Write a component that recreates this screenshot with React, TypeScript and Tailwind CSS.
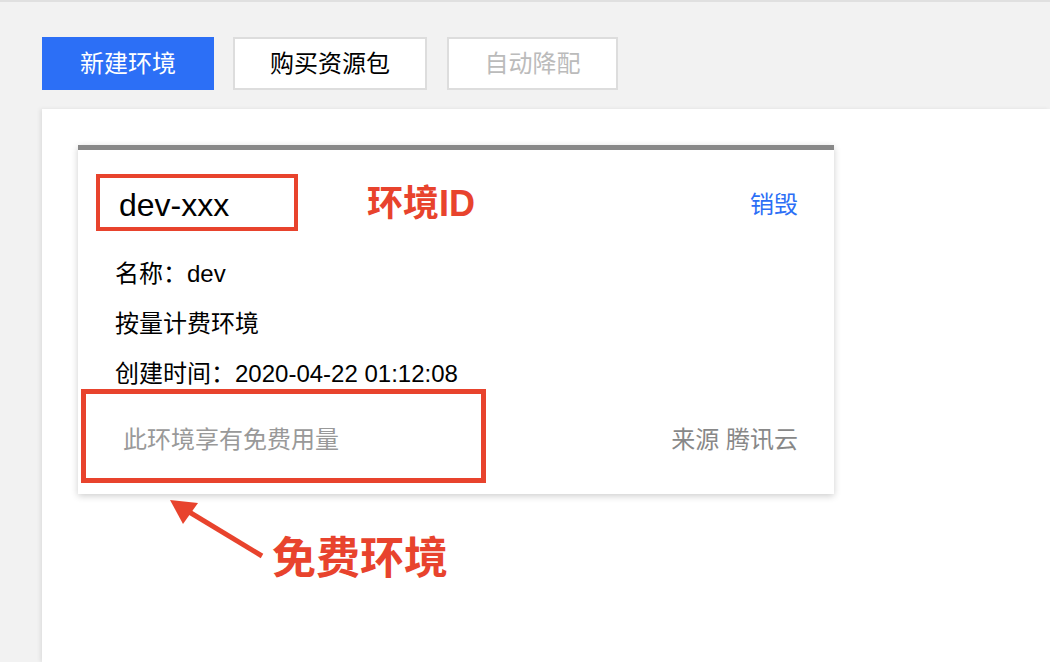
const font = { fontFamily: '"Liberation Sans", "Noto Sans CJK SC", sans-serif' };

function Arrow() {
  return (
    <svg className="absolute left-[118px] top-[381px]" width="110" height="80" viewBox="0 0 110 80">
      <line x1="26" y1="20" x2="102" y2="66" stroke="#e8432d" strokeWidth="5" />
      <polygon points="10,10 38,13 23,34" fill="#e8432d" />
    </svg>
  );
}

export default function App() {
  return (
    <div className="h-screen flex flex-col bg-[#f2f2f2] border-t-2 border-[#e0e0e0] overflow-hidden" style={font}>
      <div className="flex gap-[19px] pl-[42px] pt-[35px]">
        <button className="w-[172px] h-[53px] bg-[#2c6ff6] text-white text-[24px]">新建环境</button>
        <button className="w-[194px] h-[53px] bg-white border-2 border-[#dddddd] text-black text-[24px]">购买资源包</button>
        <button className="w-[171px] h-[53px] bg-white border-2 border-[#dddddd] text-[#bbbbbb] text-[24px] ml-px">自动降配</button>
      </div>

      <div className="relative flex-1 ml-[42px] mt-[19px] bg-white shadow-[-2px_0_4px_rgba(0,0,0,0.08)]">
        <div className="relative ml-[36px] mt-[36px] w-[756px] h-[349px] bg-white border-t-[5px] border-[#888888] shadow-[0_2px_7px_rgba(0,0,0,0.2)] px-[36px]">
          <div className="flex items-center justify-between h-[40px] mt-[35px] pl-[5px]">
            <span className="text-[32px] text-black">dev-xxx</span>
            <span className="text-[24px] text-[#2c6ff6]">销毁</span>
          </div>

          <div className="mt-[24px] pl-px text-[24px] leading-[50px] text-black">
            <div>名称：dev</div>
            <div>按量计费环境</div>
            <div>创建时间：2020-04-22 01:12:08</div>
          </div>

          <div className="flex justify-between mt-4 leading-[50px] text-[24px]">
            <span className="pl-[9px] text-[#999999]">此环境享有免费用量</span>
            <span className="text-[#888888]">来源 腾讯云</span>
          </div>

          {/* annotations */}
          <div className="absolute left-[18px] top-[24px] w-[202px] h-[57px] border-4 border-[#e8432d]" />
          <div className="absolute left-[289px] top-[34px] leading-[40px] text-[36px] font-bold text-[#e8432d]">环境ID</div>
          <div className="absolute left-[3px] top-[239px] w-[405px] h-[94px] border-[5px] border-[#e8432d]" />
        </div>

        <Arrow />
        <div className="absolute left-[230px] top-[428px] leading-[44px] text-[44px] font-bold text-[#e8432d]">免费环境</div>
      </div>
    </div>
  );
}
